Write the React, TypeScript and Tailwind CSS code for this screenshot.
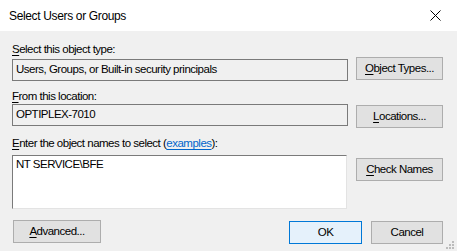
import React from "react";

function Key({ k, rest }: { k: string; rest: string }) {
  return (
    <>
      <span className="underline underline-offset-[2px]">{k}</span>
      {rest}
    </>
  );
}

function Btn({
  children,
  primary,
  className = "",
}: {
  children: React.ReactNode;
  primary?: boolean;
  className?: string;
}) {
  return (
    <button
      className={`h-[23px] border text-[11.5px] leading-none text-black ${
        primary ? "border-[#0078d7] bg-[#e5f1fb]" : "border-[#adadad] bg-[#e1e1e1]"
      } ${className}`}
    >
      {children}
    </button>
  );
}

export default function App() {
  return (
    <div
      className="w-[457px] h-[251px] bg-[#f0f0f0] flex flex-col text-[11.5px] tracking-[-0.5px] text-black"
      style={{ fontFamily: '"Liberation Sans", Arial, sans-serif' }}
    >
      {/* Title bar */}
      <div className="h-[31px] bg-white flex items-center justify-between pl-[9px] pr-[16px] shrink-0">
        <span className="text-[12px] tracking-[-0.35px]">Select Users or Groups</span>
        <svg width="11" height="11" viewBox="0 0 11 11">
          <path d="M0.5 0.5 L10.5 10.5 M10.5 0.5 L0.5 10.5" stroke="#000" strokeWidth="1" />
        </svg>
      </div>

      <div className="flex-1 flex flex-col pl-[12px] pr-[14px] pt-[12px] relative">
        <div className="h-[13px] leading-[13px]">
          <Key k="S" rest="elect this object type:" />
        </div>
        <div className="flex items-start gap-[8px] mt-[1px]">
          <div className="w-[336px] h-[22px] mt-[2px] border border-[#7a7a7a] bg-[#f0f0f0] flex items-center pl-[3px]">
            Users, Groups, or Built-in security principals
          </div>
          <Btn className="w-[87px]">
            <Key k="O" rest="bject Types..." />
          </Btn>
        </div>

        <div className="h-[13px] leading-[13px] mt-[9px]">
          <Key k="F" rest="rom this location:" />
        </div>
        <div className="flex items-start gap-[8px] mt-[1px]">
          <div className="w-[336px] h-[22px] border border-[#7a7a7a] bg-[#f0f0f0] flex items-center pl-[3px]">
            OPTIPLEX-7010
          </div>
          <Btn className="w-[87px] mt-[1px]">
            <Key k="L" rest="ocations..." />
          </Btn>
        </div>

        <div className="h-[13px] leading-[13px] mt-[9px]">
          <Key k="E" rest="nter the object names to select (" />
          <span className="text-[#0066cc] underline underline-offset-[2px]">examples</span>):
        </div>
        <div className="flex items-start gap-[8px] mt-[5px]">
          <div className="w-[335px] h-[54px] border border-[#7a7a7a] border-r-[#e3e3e3] border-b-[#e3e3e3] bg-white pl-[3px] pt-[2px] leading-[13px]">
            NT SERVICE\BFE
          </div>
          <Btn className="w-[87px] mt-[3px] ml-[1px]">
            <Key k="C" rest="heck Names" />
          </Btn>
        </div>

        <div className="flex items-start mt-[11px]">
          <Btn className="w-[88px] ml-[1px] h-[20px]">
            <Key k="A" rest="dvanced..." />
          </Btn>
          <div className="flex-1" />
          <Btn primary className="w-[73px] h-[19px] mt-[1px]">
            OK
          </Btn>
          <Btn className="w-[72px] h-[19px] mt-[1px] ml-[9px]">Cancel</Btn>
        </div>

        {/* size grip */}
        <svg className="absolute right-[3px] bottom-[2px]" width="9" height="9" viewBox="0 0 9 9">
          <g fill="#bcbcbc">
            <rect x="7" y="1" width="2" height="2" />
            <rect x="4" y="4" width="2" height="2" />
            <rect x="7" y="4" width="2" height="2" />
            <rect x="1" y="7" width="2" height="2" />
            <rect x="4" y="7" width="2" height="2" />
            <rect x="7" y="7" width="2" height="2" />
          </g>
        </svg>
      </div>
    </div>
  );
}
